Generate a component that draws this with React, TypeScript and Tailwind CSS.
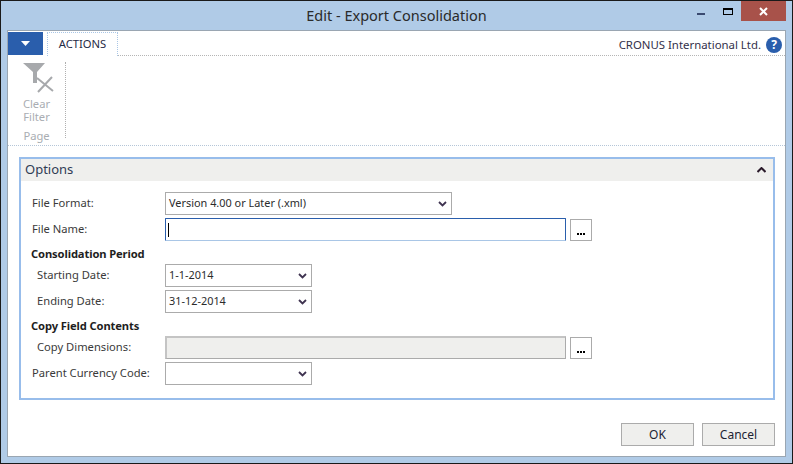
import React from "react";

const font = { fontFamily: '"Noto Sans", "Open Sans", sans-serif' };

function Chevron() {
  return (
    <svg width="9" height="6" viewBox="0 0 9 6" className="shrink-0">
      <path d="M1 1 L4.5 4.5 L8 1" fill="none" stroke="#3f3350" strokeWidth="1.8" />
    </svg>
  );
}

function Select({ value, wide }: { value?: string; wide?: boolean }) {
  return (
    <div className={`${wide ? "w-[287px]" : "w-[147px]"} h-[23px] border border-[#ababab] bg-white flex items-center justify-between pl-[3px] pr-[4px] text-[10.9px] text-[#2b2b2b]`}>
      <span>{value}</span>
      <Chevron />
    </div>
  );
}

function Dots() {
  return (
    <div className="w-[22px] h-[22px] border border-[#ababab] bg-white ml-[4px] flex items-end justify-center pb-[5px] gap-[1px]">
      <span className="w-[2px] h-[2px] bg-black" />
      <span className="w-[2px] h-[2px] bg-black" />
      <span className="w-[2px] h-[2px] bg-black" />
    </div>
  );
}

function Row({ label, indent, children, mt }: { label: string; indent?: boolean; children: React.ReactNode; mt: string }) {
  return (
    <div className={`flex items-center ${mt}`}>
      <div className={`w-[133px] text-[11.2px] text-[#3a3a3a] ${indent ? "pl-[5px]" : ""}`}>{label}</div>
      {children}
    </div>
  );
}

function Heading({ text, mt }: { text: string; mt: string }) {
  return <div className={`${mt} -ml-[1px] h-[16px] leading-[16px] text-[11.2px] font-bold tracking-[-0.12px] text-[#1e1e1e]`}>{text}</div>;
}

function FooterButton({ text }: { text: string }) {
  return (
    <div className="w-[73px] h-[23px] border border-[#ababab] bg-[#efefed] flex items-center justify-center text-[12px] text-[#1c2333]">
      {text}
    </div>
  );
}

export default function App() {
  return (
    <div style={font} className="w-[793px] h-[464px] overflow-hidden border border-[#1a1a1a] bg-[#b0cbe7] flex flex-col">
      <div className="relative h-[29px] shrink-0 flex justify-center">
        <span className="text-[14.5px] leading-[29px] text-[#2a2a2a]">Edit - Export Consolidation</span>
        <div className="absolute right-[6px] top-0 w-[45px] h-[20px] bg-[#a8524a] flex items-center justify-center">
          <svg width="9" height="9" viewBox="0 0 9 9">
            <path d="M1 1 L8 8 M8 1 L1 8" stroke="#fff" strokeWidth="2" />
          </svg>
        </div>
        <div className="absolute left-[722px] top-[7px] w-[10px] h-[7px] border border-black border-t-2" />
        <div className="absolute left-[696px] top-[12px] w-[8px] h-[2px] bg-[#3a4a70]" />
      </div>

      <div className="mx-[6px] flex-1 mb-[6px] bg-white border border-[#9aa6b2] flex flex-col min-h-0">
        {/* Tab row */}
        <div className="h-[25px] shrink-0 flex">
          <div className="w-[35px] h-[23px] mt-[1px] bg-[#2a5eac] flex items-center justify-center">
            <svg width="9" height="5" viewBox="0 0 9 5">
              <path d="M0 0 H9 L4.5 5 Z" fill="#fff" />
            </svg>
          </div>
          <div className="ml-[4px] mt-[1px] w-[71px] h-[24px] border border-b-0 border-dotted border-[#a9c6e6] flex items-center justify-center text-[11.2px] text-[#1f2a44]">
            ACTIONS
          </div>
          <div className="flex-1 border-b border-dotted border-[#b5b5b5] flex items-center justify-end pt-[3px] pr-[3px]">
            <span className="text-[11.4px] text-[#33304a] mr-[5px]">CRONUS International Ltd.</span>
            <div className="w-[16px] h-[16px] rounded-full bg-[#2a5eac] flex items-center justify-center text-white text-[12px] font-bold leading-none">?</div>
          </div>
        </div>

        {/* Ribbon */}
        <div className="h-[90px] shrink-0 border-b border-dotted border-[#b5c6d8] flex">
          <div className="w-[58px] mt-[6px] h-[76px] border-r border-dotted border-[#b0b0b0] flex flex-col items-center text-[11.2px] leading-[13px] text-[#a9adb2]">
            <svg width="32" height="32" viewBox="0 0 32 32" className="self-start ml-[14px] shrink-0">
              <path d="M1 1 H23 L15 10 V21 H11 V10 Z" fill="#a7a9ac" />
              <path d="M15 16 L31 29 M30 15 L16 30" stroke="#a7a9ac" strokeWidth="2" />
            </svg>
            <span className="mt-[3px]">Clear</span>
            <span>Filter</span>
            <span className="mt-[6px]">Page</span>
          </div>
        </div>

        {/* Section */}
        <div className="ml-[11px] mt-[11px] w-[756px] h-[243px] shrink-0 border-2 border-[#98bdeb] flex flex-col">
          <div className="h-[22px] shrink-0 bg-[#efefed] flex items-center justify-between pl-[4px] pr-[7px] text-[13px] text-[#2f3c55]">
            <span>Options</span>
            <svg width="9" height="6" viewBox="0 0 9 6">
              <path d="M0.5 5 L4.5 1 L8.5 5" fill="none" stroke="#2a1a2a" strokeWidth="2" />
            </svg>
          </div>
          <div className="pl-[11px] flex flex-col">
            <Row label="File Format:" mt="mt-[11px]">
              <Select wide value="Version 4.00 or Later (.xml)" />
            </Row>
            <Row label="File Name:" mt="mt-[3px]">
              <div className="w-[401px] h-[23px] border border-[#2a5eac] border-b-[#a9c6e6] bg-white flex items-center pl-[2px] rounded-[1px]">
                <span className="w-[1px] h-[14px] bg-black" />
              </div>
              <Dots />
            </Row>
            <Heading text="Consolidation Period" mt="mt-[5px]" />
            <Row label="Starting Date:" indent mt="mt-[2px]">
              <Select value="1-1-2014" />
            </Row>
            <Row label="Ending Date:" indent mt="mt-[3px]">
              <Select value="31-12-2014" />
            </Row>
            <Heading text="Copy Field Contents" mt="mt-[5px]" />
            <Row label="Copy Dimensions:" indent mt="mt-[2px]">
              <div className="w-[401px] h-[23px] border border-[#ababab] bg-[#efefed] border-l-2 border-t-2 border-l-[#c4c4c4] border-t-[#c4c4c4]" />
              <Dots />
            </Row>
            <Row label="Parent Currency Code:" mt="mt-[3px]">
              <Select />
            </Row>
          </div>
        </div>

        {/* Footer */}
        <div className="flex justify-end gap-[8px] pr-[10px] mt-[23px]">
          <FooterButton text="OK" />
          <FooterButton text="Cancel" />
        </div>
      </div>
    </div>
  );
}
